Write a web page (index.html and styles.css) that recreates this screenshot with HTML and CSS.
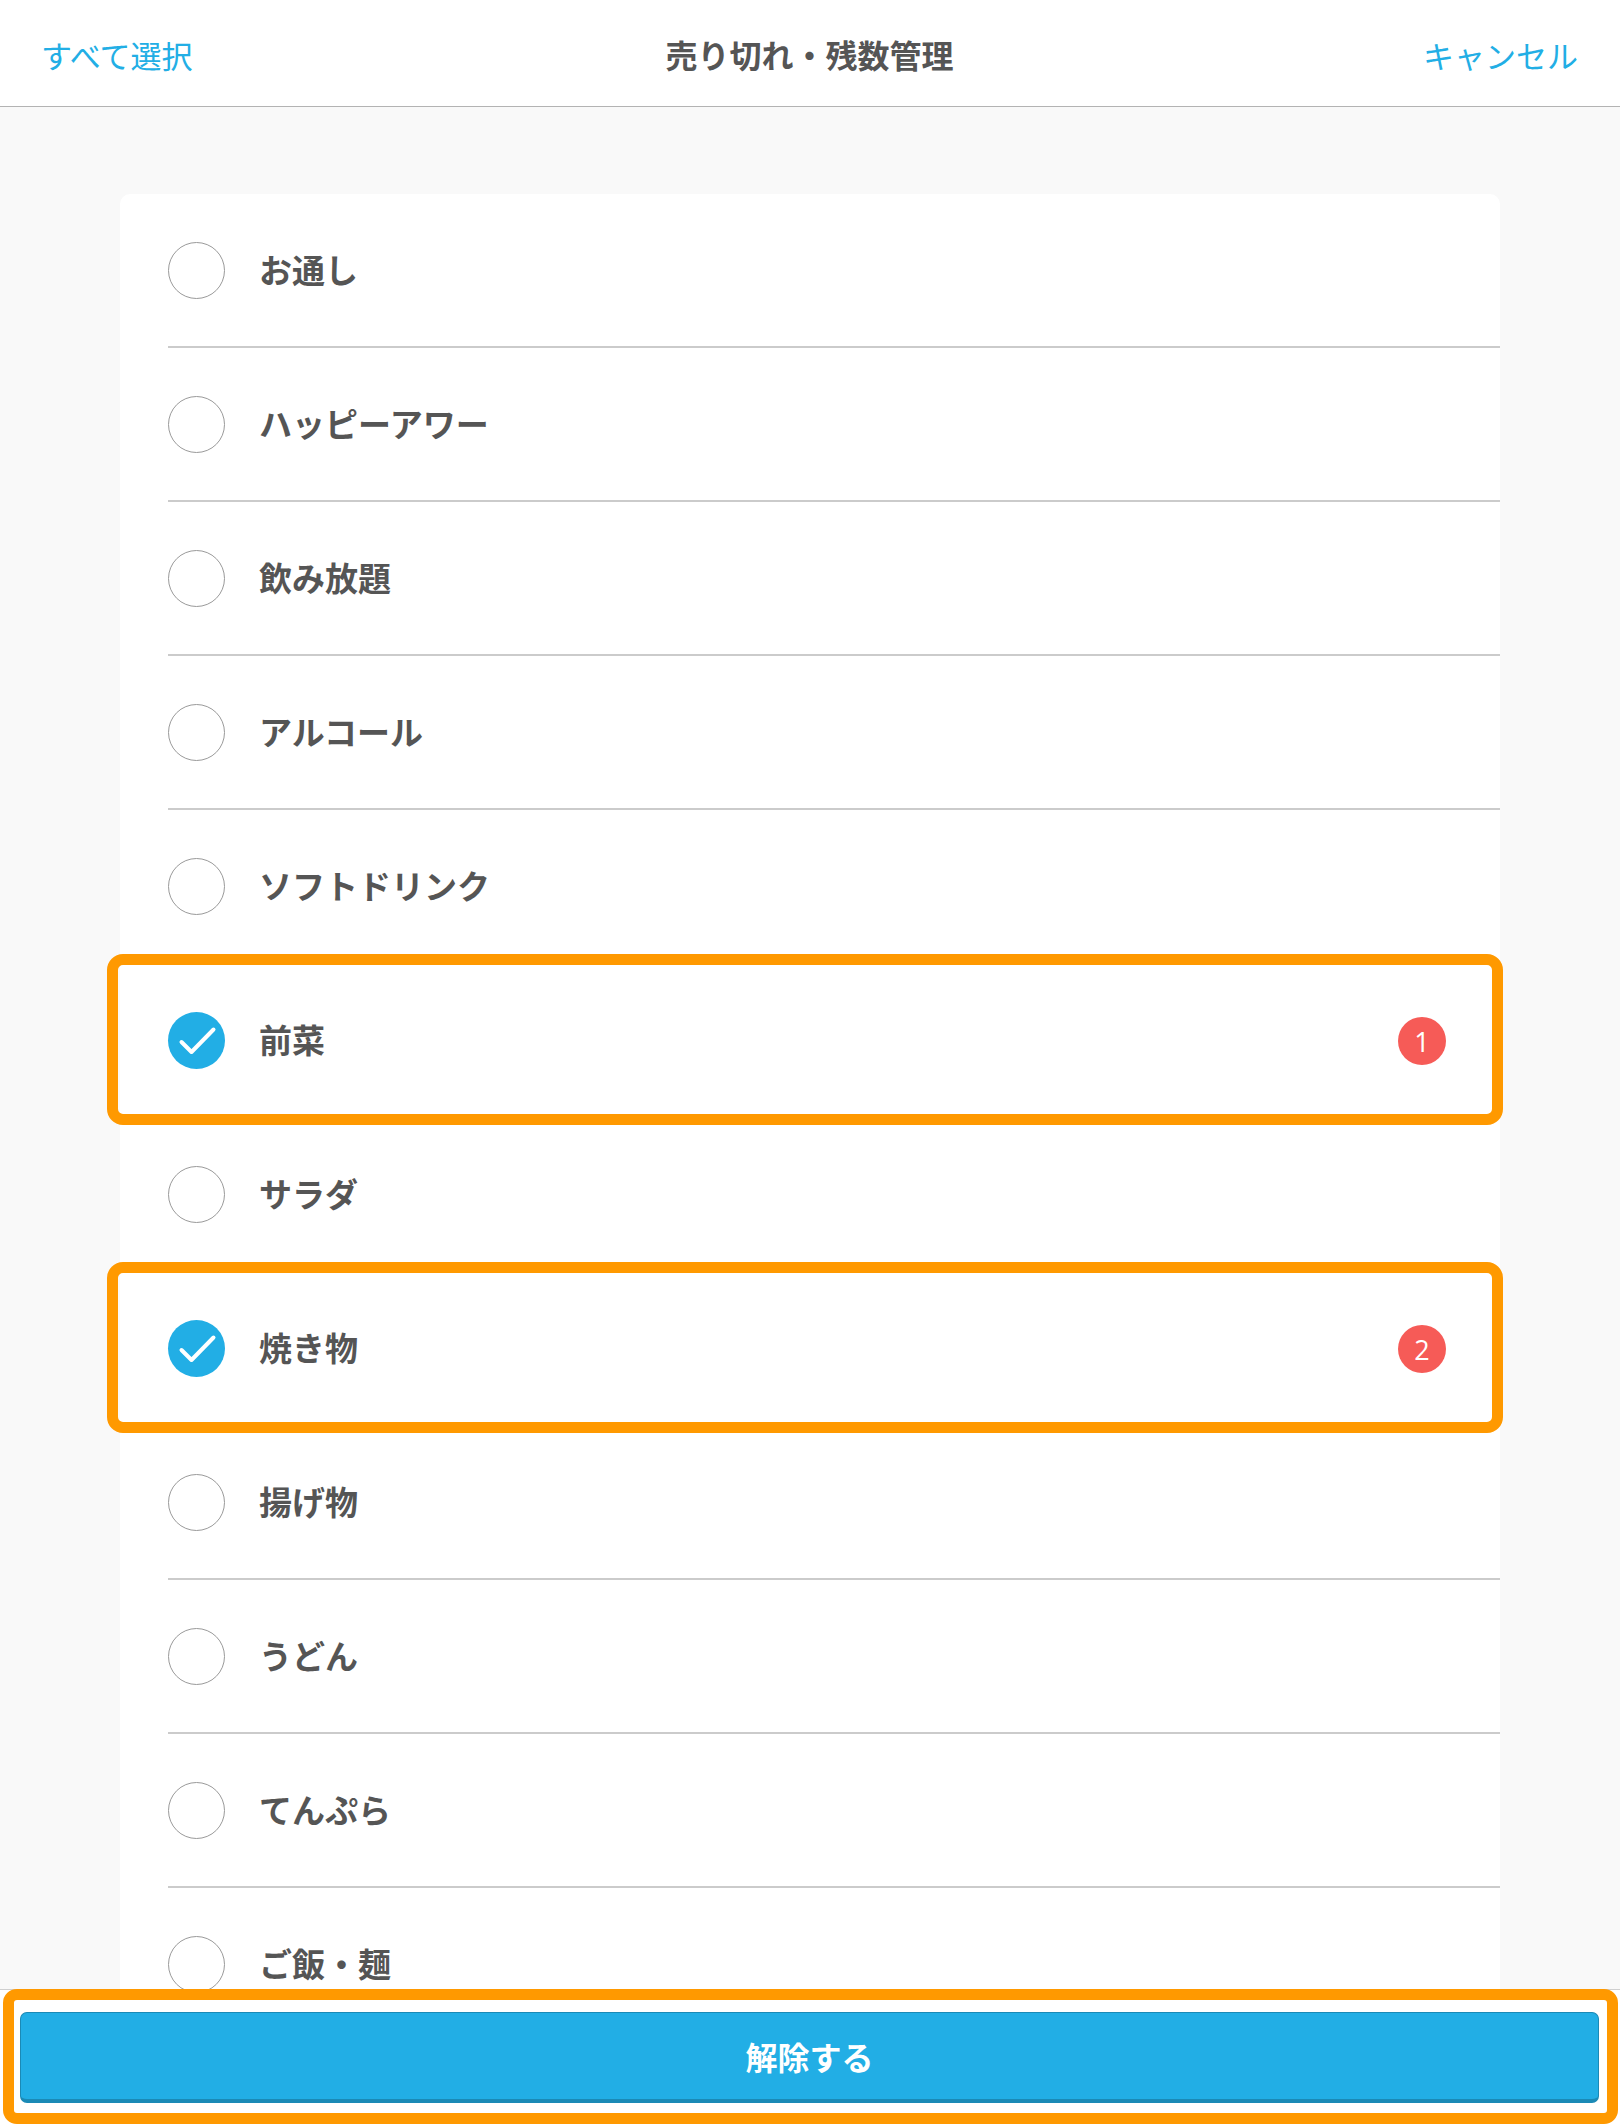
FILE: index.html
```html
<!DOCTYPE html>
<html lang="ja">
<head>
<meta charset="utf-8">
<title>売り切れ・残数管理</title>
<link rel="stylesheet" href="styles.css">
</head>
<body>
<div class="app">
  <header class="topbar">
    <span class="link">すべて選択</span>
    <span class="title">売り切れ・残数管理</span>
    <span class="link">キャンセル</span>
  </header>
  <main class="content">
    <div class="card">
      <div class="row"><span class="radio"></span><div class="row-inner"><span class="label">お通し</span></div></div>
      <div class="row"><span class="radio"></span><div class="row-inner"><span class="label">ハッピーアワー</span></div></div>
      <div class="row"><span class="radio"></span><div class="row-inner"><span class="label">飲み放題</span></div></div>
      <div class="row"><span class="radio"></span><div class="row-inner"><span class="label">アルコール</span></div></div>
      <div class="row"><span class="radio"></span><div class="row-inner"><span class="label">ソフトドリンク</span></div></div>
      <div class="row">
        <span class="radio checked"><svg viewBox="0 0 57 57" width="57" height="57"><path d="M13.5 30 L23.5 40 L45.5 17.5" fill="none" stroke="#fff" stroke-width="4" stroke-linecap="round" stroke-linejoin="round"/></svg></span>
        <div class="row-inner"><span class="label">前菜</span><span class="badge">1</span></div>
        <span class="highlight"></span>
      </div>
      <div class="row"><span class="radio"></span><div class="row-inner"><span class="label">サラダ</span></div></div>
      <div class="row">
        <span class="radio checked"><svg viewBox="0 0 57 57" width="57" height="57"><path d="M13.5 30 L23.5 40 L45.5 17.5" fill="none" stroke="#fff" stroke-width="4" stroke-linecap="round" stroke-linejoin="round"/></svg></span>
        <div class="row-inner"><span class="label">焼き物</span><span class="badge">2</span></div>
        <span class="highlight"></span>
      </div>
      <div class="row"><span class="radio"></span><div class="row-inner"><span class="label">揚げ物</span></div></div>
      <div class="row"><span class="radio"></span><div class="row-inner"><span class="label">うどん</span></div></div>
      <div class="row"><span class="radio"></span><div class="row-inner"><span class="label">てんぷら</span></div></div>
      <div class="row"><span class="radio"></span><div class="row-inner"><span class="label">ご飯・麺</span></div></div>
    </div>
  </main>
  <footer class="footer">
    <button class="primary">解除する</button>
    <span class="highlight footer-hl"></span>
  </footer>
</div>
</body>
</html>
```
FILE: styles.css
```css
* { box-sizing: border-box; }
html, body {
  margin: 0;
  padding: 0;
}
body {
  width: 1620px;
  height: 2126px;
  overflow: hidden;
  font-family: "Noto Sans CJK JP", "Noto Sans", sans-serif;
  color: #555;
  background: #fff;
}
.app {
  display: flex;
  flex-direction: column;
  height: 2126px;
}
.topbar {
  height: 107px;
  flex: none;
  display: flex;
  align-items: center;
  justify-content: space-between;
  padding: 2px 42px 0 41px;
  background: #fff;
  border-bottom: 1px solid #b3b3b3;
}
.link {
  font-size: 31px;
  color: #22aee5;
  width: 300px;
}
.link:last-child { text-align: right; }
.title {
  font-size: 32px;
  font-weight: bold;
  color: #555;
}
.content {
  flex: 1;
  overflow: hidden;
  background: #f9f9f9;
  padding: 87px 120px 0 120px;
}
.card {
  background: #fff;
  border-radius: 10px;
  width: 1380px;
}
.row {
  position: relative;
  display: flex;
  align-items: center;
  height: 154px;
  padding-left: 48px;
}
.row-inner {
  position: absolute;
  left: 48px;
  right: 0;
  top: 0;
  bottom: 0;
  border-bottom: 2px solid #cbcbcb;
  display: flex;
  align-items: center;
  padding-left: 91px;
  padding-right: 54px;
}
.radio {
  position: relative;
  z-index: 1;
  width: 57px;
  height: 57px;
  border-radius: 50%;
  border: 1.5px solid #9a9a9a;
  margin-top: -2px;
  flex: none;
}
.radio.checked {
  background: #22aee5;
  border: none;
}
.radio svg { display: block; }
.label {
  font-size: 33px;
  font-weight: bold;
  color: #555;
  margin-top: -2px;
}
.badge {
  margin-left: auto;
  width: 48px;
  height: 48px;
  border-radius: 50%;
  background: #f65b57;
  color: #fff;
  font-family: "Open Sans", "Noto Sans", sans-serif;
  font-size: 27px;
  display: flex;
  align-items: center;
  justify-content: center;
  margin-top: 2px;
}
.highlight {
  position: absolute;
  left: -13px;
  right: -3px;
  top: -10px;
  bottom: -7px;
  border: 11px solid #ff9900;
  border-radius: 16px;
  z-index: 2;
}
.footer {
  position: relative;
  flex: none;
  height: 137px;
  background: #fff;
  border-top: 1px solid #cfcfcf;
  padding: 22px 21px 0 20px;
}
.primary {
  display: block;
  width: 100%;
  height: 91px;
  background: #22aee5;
  border: 1px solid #1b8ab6;
  border-bottom-width: 4px;
  border-radius: 7px;
  color: #fff;
  font-family: "Noto Sans CJK JP", "Noto Sans", sans-serif;
  font-size: 32px;
  font-weight: bold;
  padding: 0;
}
.footer-hl {
  left: 3px;
  right: 2px;
  top: -1px;
  bottom: 2px;
  border-radius: 14px;
}
```
